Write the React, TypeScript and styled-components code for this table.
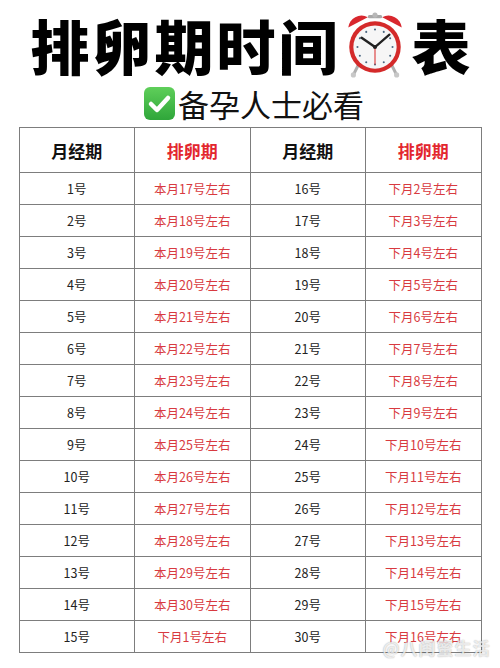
import styled, { createGlobalStyle } from "styled-components";

const GlobalStyle = createGlobalStyle`
  html, body {
    margin: 0;
    padding: 0;
    background: #ffffff;
  }
  body {
    font-family: "Noto Sans CJK SC", "Noto Sans", sans-serif;
  }
`;

const rows = Array.from({ length: 15 }, (_, i) => {
  const a = i + 1;
  const b = i + 16;
  const aOv = a + 16 <= 30 ? `本月${a + 16}号左右` : `下月${a + 16 - 30}号左右`;
  const bOv = `下月${b - 14}号左右`;
  return { a, aOv, b, bOv };
});

const AlarmClock = () => (
  <svg width="60" height="68" viewBox="0 0 58 66">
    <line x1="13" y1="52" x2="8" y2="62" stroke="#b0b0b0" strokeWidth="3" strokeLinecap="round" />
    <line x1="45" y1="52" x2="50" y2="62" stroke="#b0b0b0" strokeWidth="3" strokeLinecap="round" />
    <circle cx="8" cy="62" r="2.5" fill="#c8c8c8" />
    <circle cx="50" cy="62" r="2.5" fill="#c8c8c8" />
    <rect x="22" y="4" width="14" height="3" rx="1.5" fill="#a8a8a8" />
    <circle cx="29" cy="4" r="2.5" fill="#b8b8b8" />
    <path d="M3 16 A13 13 0 0 1 22 6 Z" fill="#d9272e" />
    <path d="M55 16 A13 13 0 0 0 36 6 Z" fill="#d9272e" />
    <circle cx="29" cy="35" r="25" fill="#d42a2a" />
    <circle cx="29" cy="35" r="21" fill="#f6f6f6" />
    {Array.from({ length: 12 }, (_, i) => {
      const ang = (i * Math.PI) / 6;
      return (
        <circle
          key={i}
          cx={29 + Math.sin(ang) * 17}
          cy={35 - Math.cos(ang) * 17}
          r="1"
          fill="#4a6680"
        />
      );
    })}
    <line x1="29" y1="35" x2="16" y2="26" stroke="#222" strokeWidth="2.4" strokeLinecap="round" />
    <line x1="29" y1="35" x2="43" y2="23" stroke="#222" strokeWidth="2.2" strokeLinecap="round" />
    <line x1="29" y1="35" x2="29" y2="52" stroke="#d82a2a" strokeWidth="1" />
    <circle cx="29" cy="35" r="2" fill="#222" />
  </svg>
);

const CheckBox = () => (
  <svg width="31" height="33" viewBox="0 0 31 33">
    <defs>
      <linearGradient id="chk" x1="0" y1="0" x2="0" y2="1">
        <stop offset="0" stopColor="#5fcf5a" />
        <stop offset="1" stopColor="#2fa63a" />
      </linearGradient>
    </defs>
    <rect x="0" y="0" width="31" height="33" rx="6" fill="url(#chk)" />
    <path d="M7 17 L13 23 L24 11" fill="none" stroke="#ffffff" strokeWidth="4.5" strokeLinecap="round" strokeLinejoin="round" />
  </svg>
);

const App = () => (
  <Page>
    <GlobalStyle />
    <Title>
      <span>排卵期时间</span>
      <ClockWrap>
        <AlarmClock />
      </ClockWrap>
      <span>表</span>
    </Title>
    <Subtitle>
      <CheckBox />
      <span>备孕人士必看</span>
    </Subtitle>
    <TableWrap>
      <Table>
        <thead>
          <tr>
            <Head>月经期</Head>
            <Head $red>排卵期</Head>
            <Head>月经期</Head>
            <Head $red>排卵期</Head>
          </tr>
        </thead>
        <tbody>
          {rows.map((r) => (
            <tr key={r.a}>
              <Cell>{r.a}号</Cell>
              <Cell $red>{r.aOv}</Cell>
              <Cell>{r.b}号</Cell>
              <Cell $red>{r.bOv}</Cell>
            </tr>
          ))}
        </tbody>
      </Table>
      <Watermark>@八闺蜜生活</Watermark>
    </TableWrap>
  </Page>
);

const Page = styled.div`
  width: 500px;
  height: 668px;
  overflow: hidden;
  background: #fff;
  display: flex;
  flex-direction: column;
  align-items: center;
  box-sizing: border-box;
  padding-top: 7px;
`;

const Title = styled.h1`
  margin: 0;
  height: 74px;
  display: flex;
  align-items: center;
  font-size: 59px;
  font-weight: 900;
  color: #000;
  letter-spacing: 3px;
  line-height: 1;
  padding-left: 4px;
`;

const ClockWrap = styled.span`
  display: inline-flex;
  margin: 0 7px 0 4px;
  transform: translateY(1px);
`;

const Subtitle = styled.div`
  height: 45px;
  display: flex;
  align-items: center;
  gap: 3px;
  font-size: 31px;
  font-weight: 400;
  color: #111;
  line-height: 1;
  padding-left: 8px;
`;

const TableWrap = styled.div`
  position: relative;
  margin-top: 1px;
`;

const Table = styled.table`
  width: 463px;
  border-collapse: collapse;
  table-layout: fixed;
  border: 1px solid #7d7d7d;
`;

const Head = styled.th<{ $red?: boolean }>`
  height: 44px;
  padding: 0;
  border: 1px solid #7d7d7d;
  font-size: 17px;
  font-weight: 700;
  color: ${(p) => (p.$red ? "#e3262e" : "#111")};
  text-align: center;
`;

const Cell = styled.td<{ $red?: boolean }>`
  height: 31px;
  padding: 0;
  border: 1px solid #7d7d7d;
  font-size: 12.5px;
  color: ${(p) => (p.$red ? "#d83a40" : "#222")};
  text-align: center;
`;

const Watermark = styled.div`
  position: absolute;
  right: -9px;
  bottom: -7px;
  font-size: 17px;
  font-weight: 700;
  color: rgba(255, 255, 255, 0.75);
  text-shadow: 0 0 1px rgba(0, 0, 0, 0.25), 0 0 2px rgba(0, 0, 0, 0.15);
  letter-spacing: 1px;
`;

export default App;
